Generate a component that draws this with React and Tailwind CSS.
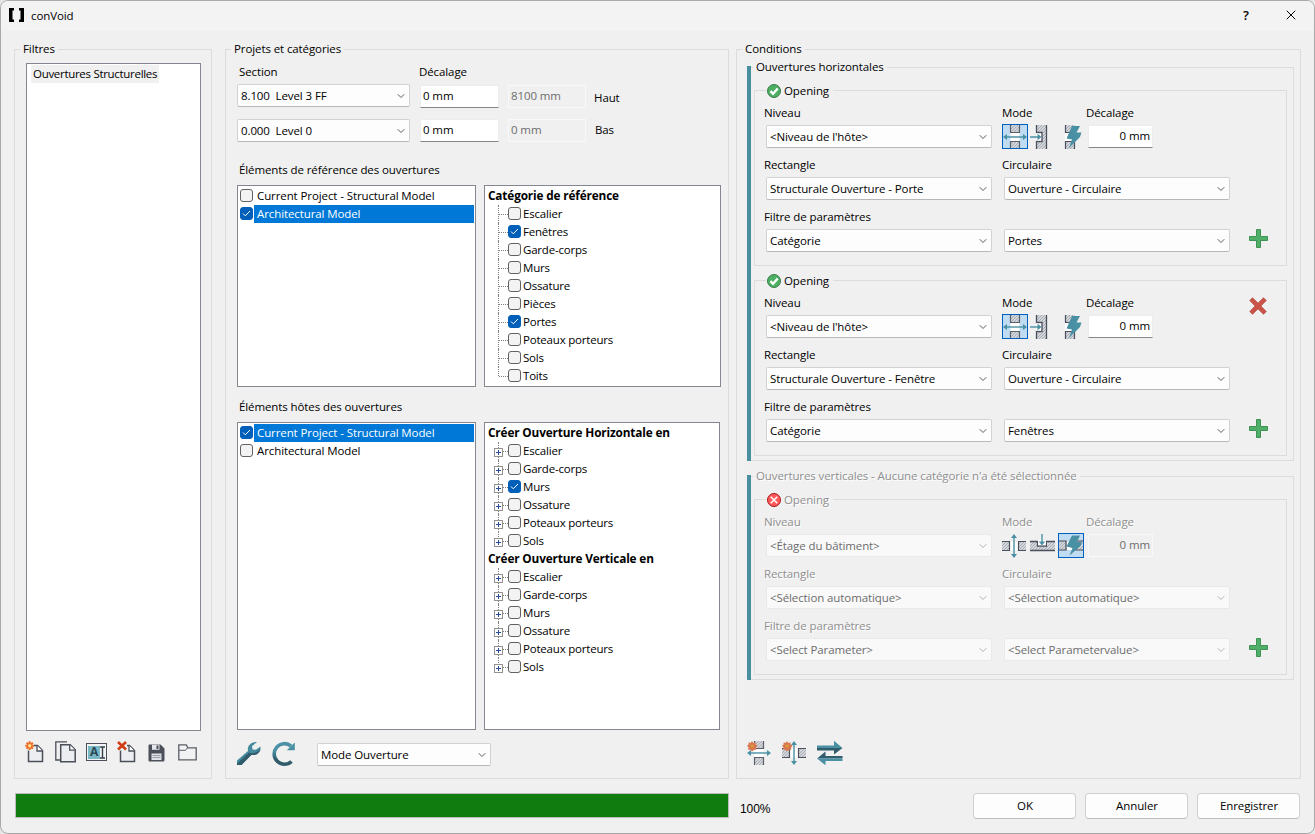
import { useState } from 'react';
import { ChevronDown, X } from 'lucide-react';

const REF_CATEGORIES = ['Escalier', 'Fenêtres', 'Garde-corps', 'Murs', 'Ossature', 'Pièces', 'Portes', 'Poteaux porteurs', 'Sols', 'Toits'];
const HOST_CATEGORIES = ['Escalier', 'Garde-corps', 'Murs', 'Ossature', 'Poteaux porteurs', 'Sols'];

/* ---------- Icons ---------- */

function Hatch({ id }) {
  return (
    <defs>
      <pattern id={id} width="3" height="3" patternUnits="userSpaceOnUse">
        <rect width="3" height="3" fill="#d3d6db" />
        <path d="M0 3L3 0" stroke="#a3a7b0" strokeWidth="0.9" />
      </pattern>
    </defs>
  );
}

function WallThrough({ spark }) {
  return (
    <svg width="24" height="24" viewBox="0 0 24 24">
      <Hatch id="h1" />
      <rect x="7.500" y="8" width="9" height="8" fill="#fff" />
      <rect x="7" y="0" width="10" height="7" fill="url(#h1)" />
      <rect x="7" y="16" width="10" height="8" fill="url(#h1)" />
      <path d="M7.500 0v7.500h9V0M7.500 24v-7.500h9V24" fill="none" stroke="#5b606b" strokeWidth="1.2" />
      <path d="M2 12h20" stroke="#4a90a4" strokeWidth="1.4" />
      <path d="M0 12l4-3v6zM24 12l-4-3v6z" fill="#4a90a4" />
      {spark && <Spark />}
    </svg>
  );
}

function WallRecess() {
  return (
    <svg width="24" height="24" viewBox="0 0 24 24">
      <Hatch id="h2" />
      <path d="M6 0h11v24H6v-8h6V8H6z" fill="url(#h2)" />
      <path d="M6.500 0v7.500H12v9H6.500V24M16.500 0v24" fill="none" stroke="#4b505c" strokeWidth="1.3" />
      <rect x="6" y="8.500" width="5" height="7" fill="#fff" />
      <path d="M0 12h8" stroke="#4a90a4" strokeWidth="1.4" />
      <path d="M11.500 12L7.500 8.800v6.400z" fill="#4a90a4" />
    </svg>
  );
}

function WallAuto() {
  return (
    <svg width="24" height="24" viewBox="0 0 24 24">
      <Hatch id="h3" />
      <rect x="7" y="8" width="8" height="8" fill="#fff" />
      <rect x="7" y="0" width="10" height="7" fill="url(#h3)" />
      <rect x="7" y="16" width="10" height="8" fill="url(#h3)" />
      <path d="M7.500 0v7.500h9M7.500 24v-7.500h9V24" fill="none" stroke="#4b505c" strokeWidth="1.2" />
      <path d="M14 1h8l-3.500 6.500h5L22 12l-11 11 3-8.500-5.500-1z" fill="#4a90a4" />
    </svg>
  );
}

function FloorThrough({ spark }) {
  return (
    <svg width="24" height="24" viewBox="0 0 24 24">
      <Hatch id="h4" />
      <rect x="8" y="7.500" width="8" height="9" fill="#fff" />
      <rect x="0" y="7" width="8" height="10" fill="url(#h4)" />
      <rect x="16" y="7" width="8" height="10" fill="url(#h4)" />
      <path d="M0 7.500h7.500v9H0M24 7.500h-7.500v9H24" fill="none" stroke="#4b505c" strokeWidth="1.2" />
      <path d="M12 2v20" stroke="#4a90a4" strokeWidth="1.4" />
      <path d="M12 0l3 4H9zM12 24l3-4H9z" fill="#4a90a4" />
      {spark && <Spark />}
    </svg>
  );
}

function FloorRecess() {
  return (
    <svg width="25" height="24" viewBox="0 0 25 24">
      <Hatch id="h5" />
      <path d="M0 7h7v5h11V7h7v10H0z" fill="url(#h5)" />
      <path d="M0 7.500h7.500V12h9V7.500H25M0 16.500h25" fill="none" stroke="#4b505c" strokeWidth="1.3" />
      <rect x="8.200" y="6" width="7.600" height="5.300" fill="#fff" />
      <path d="M12 0v8" stroke="#4a90a4" strokeWidth="1.4" />
      <path d="M12 11.500L8.800 7.500h6.400z" fill="#4a90a4" />
    </svg>
  );
}

function FloorAuto() {
  return (
    <svg width="24" height="24" viewBox="0 0 24 24">
      <Hatch id="h6" />
      <rect x="8" y="7.500" width="8" height="8.500" fill="#fff" />
      <rect x="0" y="6.500" width="7" height="10" fill="url(#h6)" />
      <rect x="16" y="6.500" width="8" height="10" fill="url(#h6)" />
      <path d="M0 7h7v9H0M24 7h-7v9h7" fill="none" stroke="#4b505c" strokeWidth="1.2" />
      <path d="M13 1.500h8L18 8h5l-1.500 4L10.500 21.500l3-7.500-6-1.500z" fill="#4a90a4" />
    </svg>
  );
}

function Spark() {
  return (
    <g>
      <path d="M5 0l1.300 1.900L8.500 1.200l.1 2.400 2.100 1.200-1.700 1.600.4 2.300-2.300.1L5 10.500 3.400 8.800l-2.300-.1.400-2.300L0 4.800l1.600-1.200.1-2.400 2.100.7z" fill="#d9784e" />
      <circle cx="5.200" cy="5" r="1.700" fill="#d99a3c" />
    </g>
  );
}

function StatusIcon({ ok }) {
  return ok ? (
    <svg width="14" height="14" viewBox="0 0 14 14">
      <circle cx="7" cy="7" r="6.500" fill="#4caf63" stroke="#3c7a4a" />
      <path d="M3.500 7.200l2.500 2.600 4.700-5.300" fill="none" stroke="#fff" strokeWidth="2.400" />
    </svg>
  ) : (
    <svg width="14" height="14" viewBox="0 0 14 14">
      <circle cx="7" cy="7" r="6.500" fill="#ff5a5a" stroke="#a81818" />
      <path d="M3.700 3.700l6.600 6.600M10.300 3.700l-6.600 6.600" stroke="#fff" strokeWidth="1.500" />
    </svg>
  );
}

function PlusIcon() {
  return (
    <svg width="19" height="19" viewBox="0 0 19 19">
      <path d="M7.500.5h4v7h7v4h-7v7h-4v-7h-7v-4h7z" fill="#4fae68" stroke="#3d9254" />
    </svg>
  );
}

function DeleteIcon() {
  return (
    <svg width="18" height="18" viewBox="0 0 18 18">
      <path d="M3.500.8L9 6.200 14.500.8l2.700 2.700L11.800 9l5.400 5.500-2.700 2.700L9 11.800l-5.500 5.400-2.700-2.700L6.200 9 .8 3.500z" fill="#cb5348" stroke="#b3423a" strokeWidth="0.8" />
    </svg>
  );
}

function Page() {
  return (
    <g>
      <path d="M3.500 4.500h9l5 5v11h-14z" fill="#eceef1" stroke="#4a4f58" strokeWidth="1.5" />
      <path d="M12 4.500v5.500h5.500" fill="#fff" stroke="#4a4f58" strokeWidth="1.3" />
    </g>
  );
}

function NewIcon() {
  return (
    <svg width="21" height="22" viewBox="0 0 21 22">
      <Page />
      <rect x="0" y="0" width="9" height="9.500" fill="#f0f0f0" />
      <path d="M4.700.3v8.800M.3 4.700h8.800M1.600 1.600l6.200 6.200M7.800 1.600L1.600 7.800" stroke="#ea6a24" strokeWidth="2" />
      <circle cx="4.700" cy="4.700" r="1.700" fill="#ffe08a" />
    </svg>
  );
}

function CopyIcon() {
  return (
    <svg width="22" height="22" viewBox="0 0 22 22">
      <path d="M5 19H.8V.8H12" fill="none" stroke="#4a4f58" strokeWidth="1.300" />
      <path d="M5.700 3.700h9.500l5 5v12H5.700z" fill="#eceef1" stroke="#4a4f58" strokeWidth="1.500" />
      <path d="M14.700 3.700v5.500h5.500" fill="#fff" stroke="#4a4f58" strokeWidth="1.300" />
    </svg>
  );
}

function RenameIcon() {
  return (
    <span className="flex h-[18px] w-[21px] items-center border-[1.5px] border-[#4a4f58] bg-[#f2f4f6] p-px">
      <span className="flex h-[13px] w-[12px] items-center justify-center bg-[#7ab8c8] text-[12px] font-bold leading-none text-[#2c4a58]">A</span>
      <svg width="5" height="13" viewBox="0 0 5 13">
        <path d="M0 1h5M0 12h5M2.500 1v11" stroke="#33404a" strokeWidth="1.400" />
      </svg>
    </span>
  );
}

function RemoveIcon() {
  return (
    <svg width="21" height="22" viewBox="0 0 21 22">
      <Page />
      <rect x="0" y="0" width="10" height="9.500" fill="#f0f0f0" />
      <path d="M1 1l8 7.500M9 1L1 8.500" stroke="#d23c14" strokeWidth="2.600" />
    </svg>
  );
}

function SaveIcon() {
  return (
    <svg width="17" height="18" viewBox="0 0 17 18">
      <path d="M1.500.5h11l4 4v11.500a1.500 1.500 0 0 1-1.500 1.500H1.500a1 1 0 0 1-1-1v-15a1 1 0 0 1 1-1z" fill="#4a4f58" />
      <path d="M4 .8h7.500v5H4z" fill="#e4e6ea" />
      <path d="M8.500 1.500h2v3.500h-2z" fill="#4a4f58" />
      <path d="M3.500 9.500h10v6.500h-10z" fill="#dfe2e6" />
      <path d="M4.500 11.500h8M4.500 13.500h8" stroke="#8e939c" strokeWidth="0.9" />
    </svg>
  );
}

function FolderIcon() {
  return (
    <svg width="19" height="17" viewBox="0 0 19 17">
      <path d="M.8 15.800V.8h7.500l1.500 3h8.400v12z" fill="#f1f2f4" stroke="#5a5e66" strokeWidth="1.300" />
      <path d="M1 6.300h6.500l2-2.300" fill="none" stroke="#5a5e66" />
    </svg>
  );
}

function WrenchIcon() {
  return (
    <svg width="24" height="24" viewBox="0 0 24 24">
      <path d="M0 18.500L11 9C10 4.500 13 0 20 0l-5 4.200.5 3.300 3.300.3 4.700-3.300C24 10 19.500 14 14.500 12.800L4.500 23H0z" fill="#458ba0" />
      <path d="M0 21.500L12 10.500c3.500 1.500 8.500.5 11.500-4-.2 4.500-4.500 7.500-9 6.300L4.500 23H0z" fill="#315c6c" />
    </svg>
  );
}

function RefreshIcon() {
  return (
    <svg width="25" height="26" viewBox="0 0 25 26">
      <defs>
        <linearGradient id="rg" x1="0" y1="0" x2="0" y2="1">
          <stop offset="0.35" stopColor="#4a90a4" />
          <stop offset="0.75" stopColor="#315c6c" />
        </linearGradient>
      </defs>
      <path d="M20.500 20.500A10.300 10.300 0 1 1 20 5" fill="none" stroke="url(#rg)" strokeWidth="3.600" />
      <path d="M23.800 1.500v7.700h-8z" fill="#4a90a4" />
    </svg>
  );
}

function SwapIcon() {
  return (
    <svg width="26" height="26" viewBox="0 0 26 26">
      <path d="M0 5.500h17V.8L25.500 8H0z" fill="#4a90a4" />
      <path d="M0 8h25.500L17 14.500v-4H0z" fill="#315c6c" />
      <path d="M25.500 16H8.500v-4.500L0 18.500h25.500z" fill="#315c6c" />
      <path d="M25.500 18.500H0l8.500 6.800V21h17z" fill="#4a90a4" />
    </svg>
  );
}

/* ---------- Controls ---------- */

function Group({ title, icon, disabled, className, legendClass, children }) {
  return (
    <fieldset className={`min-w-0 border-[#dcdcdc] ${className}`}>
      <legend
        className={`flex h-[17px] items-center gap-[3px] whitespace-nowrap ${icon ? '' : 'pb-[2px]'} ${legendClass}
          ${disabled ? 'text-[#8f8f8f] text-shadow-[1px_1px_0_#fff]' : ''}`}
      >
        {icon}
        {title}
      </legend>
      {children}
    </fieldset>
  );
}

function Combo({ value, disabled, className = '' }) {
  return (
    <button
      disabled={disabled}
      className={`flex h-[23px] shrink-0 items-center justify-between whitespace-pre rounded-[2px] border pl-[3px] pr-[2px] text-left
        ${disabled ? 'border-[#e9e9e9] bg-[#f9f9f9] text-[#6d6d6d]' : 'border-[#d2d2d2] border-b-[#b8b8b8] bg-[#fdfdfd]'} ${className}`}
    >
      {value}
      <ChevronDown size={12} strokeWidth={2} className={disabled ? 'text-[#b4b4b4]' : 'text-[#5c5c5c]'} />
    </button>
  );
}

function Field({ value, disabled, right, className }) {
  return (
    <div
      className={`flex h-[23px] shrink-0 items-center border px-[2px] pb-[2px] ${right ? 'justify-end' : ''}
        ${disabled ? 'border-[#f8f8f8] bg-[#f0f0f0]' : 'border-[#ececec] border-b-[#868686] bg-white'} ${className}`}
    >
      {value}
    </div>
  );
}

function Check({ on }) {
  return (
    <span className={`mt-[2px] flex size-[13px] shrink-0 items-center justify-center rounded-[3px] border ${on ? 'border-[#005fb8] bg-[#005fb8]' : 'border-[#626262] bg-[#f3f3f3]'}`}>
      {on && (
        <svg width="9" height="7" viewBox="0 0 9 7">
          <path d="M1 3.500l2.300 2.300L8 1" fill="none" stroke="#fff" strokeWidth="1" />
        </svg>
      )}
    </span>
  );
}

function ProjectList({ items, className }) {
  return (
    <div className={`w-[239px] border border-[#828790] bg-white py-px pl-[2px] pr-px ${className}`}>
      {items.map(({ name, on }) => (
        <div key={name} className="flex h-[18px] gap-px">
          <Check on={on} />
          <span className={`h-full flex-1 pl-[3px] ${on ? 'bg-[#0078d7] text-white' : ''}`}>{name}</span>
        </div>
      ))}
    </div>
  );
}

function TreeSection({ title, items, checked, expandable }) {
  return (
    <>
      <div className="h-[18px] pl-[3px] text-[11.800px] font-bold tracking-[-0.15px]">{title}</div>
      {items.map((name, i) => (
        <div key={name} className="flex h-[18px] pl-[9px]">
          <span className="flex h-full w-[14px] shrink-0">
            <span className="relative flex w-[9px] justify-center">
              <span className={`border-l border-dotted border-[#808080] ${i === items.length - 1 ? 'h-[9px]' : 'h-full'}`} />
              {expandable && (
                <span className="absolute left-0 top-[6px] flex size-[9px] items-center justify-center border border-[#919191] bg-white">
                  <svg width="5" height="5" viewBox="0 0 5 5"><path d="M2.500 0v5M0 2.500h5" stroke="#2a4a9a" /></svg>
                </span>
              )}
            </span>
            <span className={`mt-[9px] flex-1 border-t border-dotted border-[#808080] ${expandable ? '' : '-ml-1'}`} />
          </span>
          <Check on={checked.includes(name)} />
          <span className="pl-[2px] tracking-[-0.2px]">{name}</span>
        </div>
      ))}
    </>
  );
}

function ModeButton({ active, onClick, children }) {
  return (
    <button
      onClick={onClick}
      className={`flex h-[25px] w-[26px] shrink-0 items-center overflow-hidden ${active ? 'border border-[#0060c0] bg-[#c0dcf3]' : ''}`}
    >
      {children}
    </button>
  );
}

function Opening({ level, rect, circ, param, value, vertical, removable }) {
  const [mode, setMode] = useState(vertical ? 2 : 0);
  const icons = vertical ? [FloorThrough, FloorRecess, FloorAuto] : [WallThrough, WallRecess, WallAuto];
  const label = `flex h-[17px] items-center ${vertical ? 'text-[#8f8f8f] text-shadow-[1px_1px_0_#fff]' : ''}`;

  return (
    <Group
      title="Opening"
      icon={<StatusIcon ok={!vertical} />}
      disabled={vertical}
      className="ml-[3px] h-[184px] w-[533px] border"
      legendClass="ml-[11px] pl-px pr-1"
    >
      <div className="flex flex-col gap-2 pl-[9px] pt-[5px]">
        <div className="flex h-[44px]">
          <div className="w-[238px]">
            <div className={label}>Niveau</div>
            <Combo value={level} disabled={vertical} className="ml-[2px] mt-1 w-[226px]" />
          </div>
          <div className="w-[84px]">
            <div className={label}>Mode</div>
            <div className="mt-[3px] flex gap-[2px]">
              {icons.map((Icon, i) => (
                <ModeButton key={i} active={mode === i} onClick={() => setMode(i)}><Icon /></ModeButton>
              ))}
            </div>
          </div>
          <div className="w-[163px]">
            <div className={label}>Décalage</div>
            <Field value="0 mm" right disabled={vertical} className={`ml-[2px] mt-1 w-[65px] ${vertical ? 'text-[#6d6d6d]' : ''}`} />
          </div>
          {removable && <div className="pt-[3px]"><DeleteIcon /></div>}
        </div>

        <div className="flex h-[44px]">
          <div className="w-[238px]">
            <div className={label}>Rectangle</div>
            <Combo value={rect} disabled={vertical} className="ml-[2px] mt-1 w-[226px]" />
          </div>
          <div>
            <div className={label}>Circulaire</div>
            <Combo value={circ} disabled={vertical} className="ml-[2px] mt-1 w-[226px]" />
          </div>
        </div>

        <div>
          <div className={label}>Filtre de paramètres</div>
          <div className="mt-1 flex">
            <Combo value={param} disabled={vertical} className="ml-[2px] w-[226px]" />
            <Combo value={value} disabled={vertical} className="ml-[12px] w-[226px]" />
            <button className="ml-[19px] h-[19px]"><PlusIcon /></button>
          </div>
        </div>
      </div>
    </Group>
  );
}

function ActionButton({ children }) {
  return (
    <button className="h-[26px] w-[103px] rounded-[4px] border border-[#d0d0d0] border-b-[#bcbcbc] bg-[#fdfdfd] pb-[2px] pl-px">{children}</button>
  );
}

/* ---------- Window ---------- */

export default function App() {
  return (
    <div className="h-[834px] w-[1315px] bg-[#e6e6e6]">
      <div className="flex h-full flex-col overflow-hidden rounded-[8px] border border-[#a9a9a9] bg-[#f0f0f0] font-['Open_Sans',sans-serif] text-[11.500px] leading-[17px] tracking-[-0.1px] text-black">
        {/* Title bar */}
        <div className="flex h-[30px] shrink-0 items-center bg-[#f3f3f3] pb-[2px] pl-2">
          <svg width="15" height="14" viewBox="0 0 15 14">
            <path d="M0 0h5v2.500H3.500v9H5V14H0zM15 0h-5v2.500h1.500v9H10V14h5z" fill="#000" />
          </svg>
          <span className="ml-[7px] flex-1">conVoid</span>
          <span className="w-[40px] text-[13px] font-semibold">?</span>
          <X size={16} strokeWidth={1.500} className="mr-[15px]" />
        </div>

        <div className="mt-[10px] flex h-[738px] shrink-0 pl-[13px]">
          {/* Filtres */}
          <Group title="Filtres" className="w-[198px] border" legendClass="ml-[5px] px-[3px]">
            <div className="ml-[11px] mt-[5px] h-[668px] w-[175px] border border-[#828790] bg-white p-1 pt-px">
              <div className="h-[18px] w-fit bg-[#f0f0f0] px-[2px] tracking-[-0.3px]">Ouvertures Structurelles</div>
            </div>
            <div className="mt-[10px] flex h-[22px] items-center pl-[10px]">
              <span className="w-[30px]"><NewIcon /></span>
              <span className="w-[31px]"><CopyIcon /></span>
              <span className="w-[31px]"><RenameIcon /></span>
              <span className="w-[31px]"><RemoveIcon /></span>
              <span className="w-[30px] pt-px"><SaveIcon /></span>
              <FolderIcon />
            </div>
          </Group>

          {/* Projets et catégories */}
          <Group title="Projets et catégories" className="ml-[13px] w-[504px] border" legendClass="ml-[5px] px-[3px]">
            <div className="pl-[11px]">
              <div className="mt-[5px] flex h-[17px] pl-[2px]">
                <span className="w-[180px]">Section</span>
                <span>Décalage</span>
              </div>
              <div className="mt-1 flex h-[23px]">
                <Combo value="8.100  Level 3 FF" className="w-[173px]" />
                <Field value="0 mm" className="ml-[10px] mt-px w-[79px]" />
                <Field value="8100 mm" disabled className="ml-[9px] mt-px w-[78px] text-[#6d6d6d]" />
                <span className="ml-[8px] mt-[5px]">Haut</span>
              </div>
              <div className="mt-3 flex h-[23px]">
                <Combo value="0.000  Level 0" className="w-[173px]" />
                <Field value="0 mm" className="ml-[10px] w-[79px]" />
                <Field value="0 mm" disabled className="ml-[9px] w-[78px] text-[#6d6d6d]" />
                <span className="ml-[9px] mt-[2px]">Bas</span>
              </div>

              <div className="mt-[19px] pl-[2px]">Éléments de référence des ouvertures</div>
              <div className="mt-[7px] flex gap-2">
                <ProjectList
                  className="h-[202px]"
                  items={[{ name: 'Current Project - Structural Model' }, { name: 'Architectural Model', on: true }]}
                />
                <div className="h-[202px] w-[237px] border border-[#828790] bg-white pt-px">
                  <TreeSection title="Catégorie de référence" items={REF_CATEGORIES} checked={['Fenêtres', 'Portes']} />
                </div>
              </div>

              <div className="mt-[11px] pl-[2px]">Éléments hôtes des ouvertures</div>
              <div className="mt-[7px] flex gap-2">
                <ProjectList
                  className="h-[308px]"
                  items={[{ name: 'Current Project - Structural Model', on: true }, { name: 'Architectural Model' }]}
                />
                <div className="h-[308px] w-[236px] border border-[#828790] bg-white pt-px">
                  <TreeSection title="Créer Ouverture Horizontale en" items={HOST_CATEGORIES} checked={['Murs']} expandable />
                  <TreeSection title="Créer Ouverture Verticale en" items={HOST_CATEGORIES} checked={[]} expandable />
                </div>
              </div>

              <div className="mt-[12px] flex h-[25px] items-center">
                <span className="w-[34px] pb-[2px]"><WrenchIcon /></span>
                <span className="w-[46px] pb-px"><RefreshIcon /></span>
                <Combo value="Mode Ouverture" className="w-[174px]" />
              </div>
            </div>
          </Group>

          {/* Conditions */}
          <Group title="Conditions" className="ml-[7px] w-[565px] border" legendClass="ml-[5px] px-[3px]">
            <div className="flex h-[720px] flex-col pl-[10px]">
              <div className="mt-2 flex h-[395px]">
                <div className="w-1 bg-[#4a8fa0]" />
                <Group title="Ouvertures horizontales" className="-mt-[7px] h-[402px] w-[543px] border-y border-r" legendClass="ml-[2px] px-[3px]">
                  <div className="flex flex-col gap-[6px] pt-[6px]">
                    <Opening level="<Niveau de l'hôte>" rect="Structurale Ouverture - Porte" circ="Ouverture - Circulaire" param="Catégorie" value="Portes" />
                    <Opening level="<Niveau de l'hôte>" rect="Structurale Ouverture - Fenêtre" circ="Ouverture - Circulaire" param="Catégorie" value="Fenêtres" removable />
                  </div>
                </Group>
              </div>
              <div className="mt-[14px] flex h-[205px]">
                <div className="w-1 bg-[#4a8fa0]" />
                <Group
                  title="Ouvertures verticales - Aucune catégorie n'a été sélectionnée"
                  disabled
                  className="-mt-[7px] h-[212px] w-[543px] border-y border-r"
                  legendClass="ml-[2px] px-[3px]"
                >
                  <div className="pt-[6px]">
                    <Opening
                      level="<Étage du bâtiment>"
                      rect="<Sélection automatique>"
                      circ="<Sélection automatique>"
                      param="<Select Parameter>"
                      value="<Select Parametervalue>"
                      vertical
                    />
                  </div>
                </Group>
              </div>
              <div className="mt-auto mb-[12px] flex h-[26px] items-center">
                <span className="w-[35px]"><WallThrough spark /></span>
                <span className="w-[35px]"><FloorThrough spark /></span>
                <SwapIcon />
              </div>
            </div>
          </Group>
        </div>

        {/* Footer */}
        <div className="flex pl-[14px] pt-[14px]">
          <div className="h-[25px] w-[714px] border border-[#bcbcbc] bg-[#107c10]" />
          <span className="ml-[11px] mt-[8px] w-[233px] font-['Liberation_Sans',sans-serif] text-[12px]">100%</span>
          <div className="flex gap-[9px]">
            <ActionButton>OK</ActionButton>
            <ActionButton>Annuler</ActionButton>
            <ActionButton>Enregistrer</ActionButton>
          </div>
        </div>
      </div>
    </div>
  );
}
